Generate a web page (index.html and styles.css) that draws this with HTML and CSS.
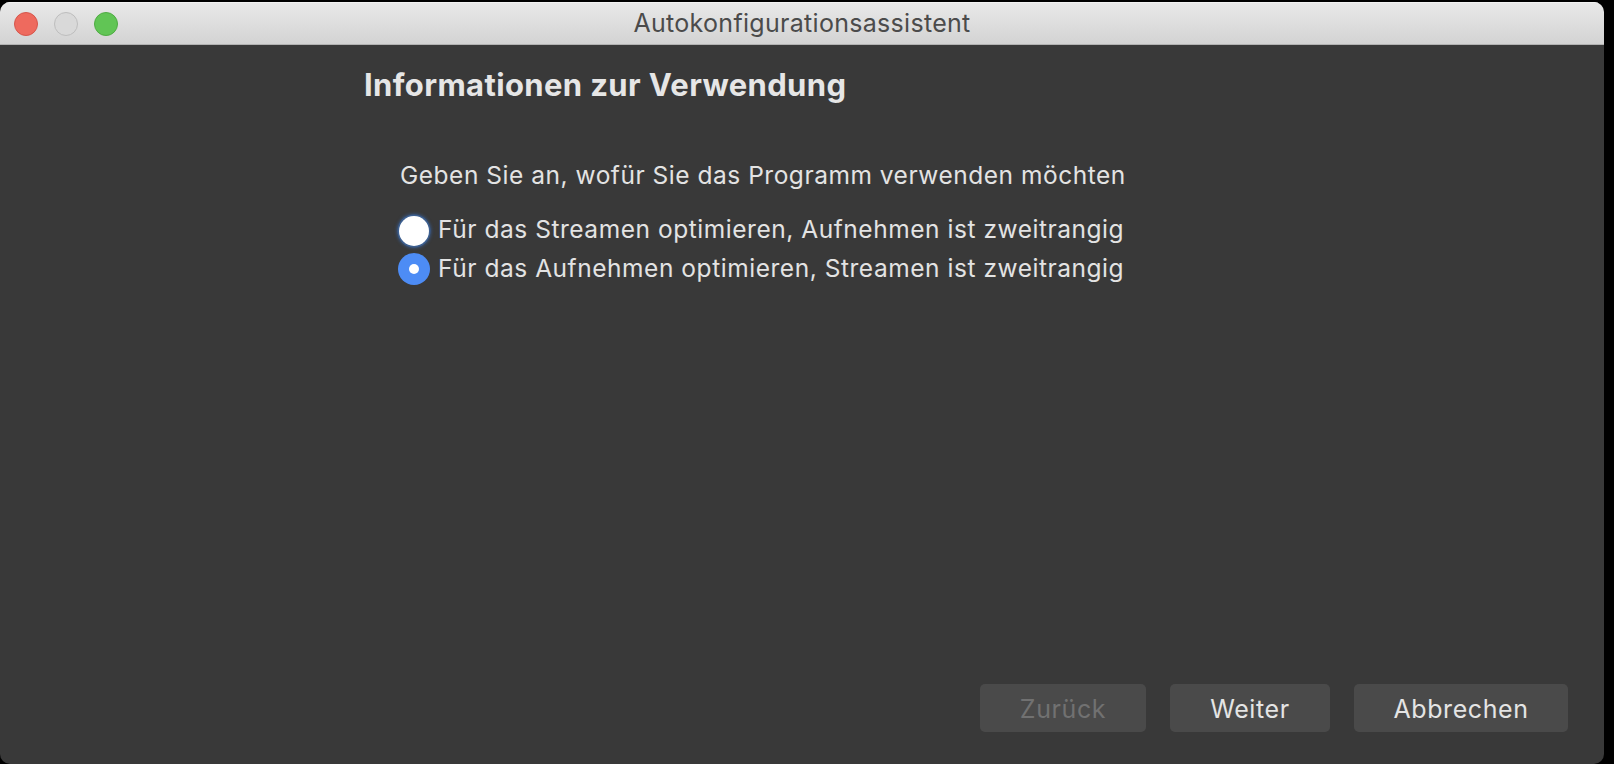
FILE: index.html
```html
<!DOCTYPE html>
<html lang="de">
<head>
<meta charset="utf-8">
<title>Autokonfigurationsassistent</title>
<link rel="stylesheet" href="styles.css">
</head>
<body>
<div class="window">
  <header class="titlebar">
    <div class="lights">
      <span class="light light-close"></span>
      <span class="light light-min"></span>
      <span class="light light-max"></span>
    </div>
    <div class="title">Autokonfigurationsassistent</div>
    <div class="spacer"></div>
  </header>
  <main class="content">
    <h1 class="heading">Informationen zur Verwendung</h1>
    <section class="usage">
      <p class="prompt">Geben Sie an, wofür Sie das Programm verwenden möchten</p>
      <div class="options">
        <label class="option"><span class="radio radio-focus"></span><span class="option-text">Für das Streamen optimieren, Aufnehmen ist zweitrangig</span></label>
        <label class="option"><span class="radio radio-checked"><span class="dot"></span></span><span class="option-text">Für das Aufnehmen optimieren, Streamen ist zweitrangig</span></label>
      </div>
    </section>
    <footer class="buttons">
      <button class="btn btn-back" disabled>Zurück</button>
      <button class="btn btn-next">Weiter</button>
      <button class="btn btn-cancel">Abbrechen</button>
    </footer>
  </main>
</div>
</body>
</html>
```

FILE: styles.css
```css
* { box-sizing: border-box; }

html, body {
  margin: 0;
  padding: 0;
  background: #000;
  height: 100%;
  overflow: hidden;
}

body {
  font-family: Inter, "Noto Sans", "Liberation Sans", sans-serif;
}

.window {
  width: 1604px;
  height: 762px;
  margin-top: 2px;
  border-radius: 10px;
  overflow: hidden;
  display: flex;
  flex-direction: column;
  background: #393939;
}

.titlebar {
  height: 43px;
  flex: none;
  display: grid;
  grid-template-columns: 1fr auto 1fr;
  align-items: center;
  background: linear-gradient(#e9e9e9, #d3d3d3);
  border-bottom: 1px solid #b2b2b2;
  box-shadow: inset 0 1px 0 #f2f2f2;
}

.lights {
  display: flex;
  gap: 16px;
  padding-left: 14px;
  align-self: start;
  padding-top: 10px;
}

.light {
  width: 24px;
  height: 24px;
  border-radius: 50%;
  display: block;
}

.light-close { background: #ee6a5e; border: 1px solid #d5564c; }
.light-min { background: #d9d9d9; border: 1px solid #bdbdbd; }
.light-max { background: #61c555; border: 1px solid #4fab43; }

.title {
  font-size: 25px;
  letter-spacing: 0.3px;
  line-height: 42px;
  color: #4b4b4b;
  padding-bottom: 1px;
}

.content {
  flex: 1;
  display: flex;
  flex-direction: column;
  padding-top: 22px;
}

.heading {
  margin: 0;
  padding-left: 364px;
  font-size: 31px;
  letter-spacing: 0.37px;
  line-height: 36px;
  font-weight: 700;
  color: #e6e6e6;
}

.usage {
  padding-left: 400px;
  margin-top: 56.5px;
}

.prompt {
  margin: 0;
  font-size: 24.5px;
  letter-spacing: 0.52px;
  line-height: 30px;
  color: #e3e3e3;
}

.options {
  margin-top: 20.75px;
  display: flex;
  flex-direction: column;
  margin-left: -2px;
}

.option {
  display: flex;
  align-items: center;
  gap: 8px;
  height: 38.5px;
  font-size: 24.5px;
  letter-spacing: 0.54px;
  line-height: 38.5px;
  color: #e3e3e3;
}

.radio {
  width: 32px;
  height: 32px;
  border-radius: 50%;
  flex: none;
  margin-top: 2px;
  display: flex;
  align-items: center;
  justify-content: center;
}

.radio-focus {
  width: 30px;
  height: 30px;
  margin-left: 1px;
  margin-right: 1px;
  background: #ffffff;
  box-shadow: 0 0 0 1.5px #3d5f8f, 0 0 3px 2.5px rgba(55, 90, 140, 0.75);
}

.radio-checked {
  background: #4d8cf5;
}

.dot {
  width: 10px;
  height: 10px;
  border-radius: 50%;
  background: #fff;
}

.buttons {
  margin-top: auto;
  display: flex;
  justify-content: flex-end;
  gap: 24px;
  padding-right: 36px;
  padding-bottom: 32px;
}

.btn {
  height: 48px;
  border: none;
  border-radius: 5px;
  background: #4a4a4a;
  font-family: inherit;
  font-size: 25px;
  letter-spacing: 0.6px;
  line-height: 46px;
  padding: 2px 0 0;
  color: #e4e4e4;
  text-align: center;
}

.btn-back { width: 166px; color: #717171; }
.btn-next { width: 160px; }
.btn-cancel { width: 214px; }
```
